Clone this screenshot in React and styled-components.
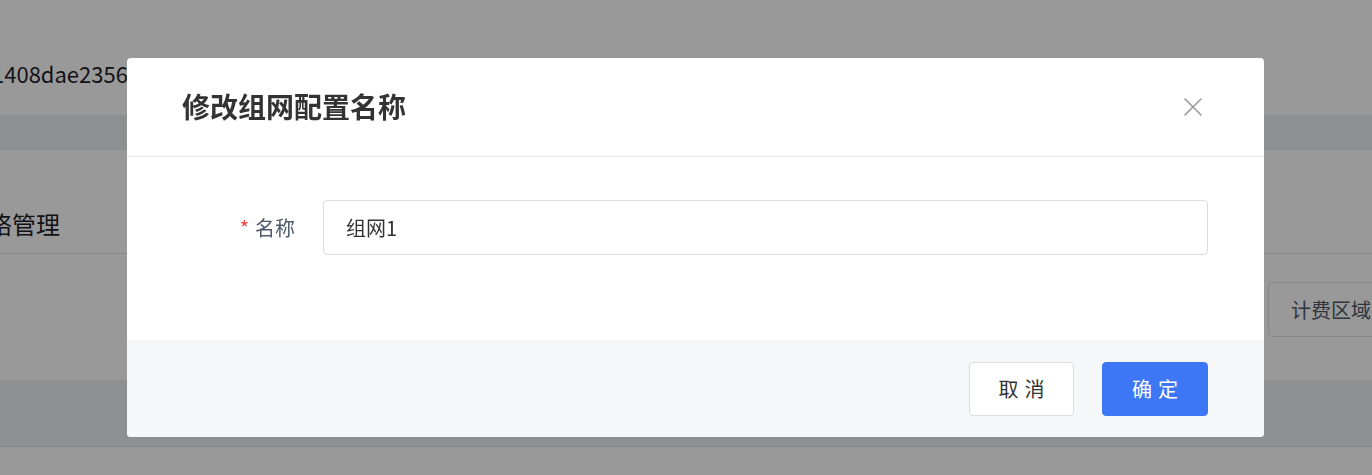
import styled, { createGlobalStyle } from "styled-components";

const GlobalStyle = createGlobalStyle`
  html, body {
    margin: 0;
    padding: 0;
    background: #ffffff;
    overflow: hidden;
  }
  body {
    font-family: "Noto Sans CJK SC", "Noto Sans", sans-serif;
    color: #1d2129;
  }
`;

// page behind the dialog
const Page = styled.div`
  width: 100%;
  height: 475px;
  overflow: hidden;
  display: flex;
  flex-direction: column;
`;

const TopBar = styled.div`
  height: 115px;
  display: flex;
  align-items: center;
  padding-top: 30px;
  box-sizing: border-box;
  font-size: 22px;
  color: #1d2129;
  span {
    margin-left: -8px;
  }
`;

const Band = styled.div`
  height: ${p => p.$h}px;
  background: #edeef1;
  flex-shrink: 0;
`;

const Section = styled.div`
  display: flex;
  flex-direction: column;
  height: 230px;
  flex-shrink: 0;
`;

const SectionTitle = styled.div`
  height: 104px;
  display: flex;
  align-items: center;
  padding-top: 44px;
  box-sizing: border-box;
  font-size: 24px;
  color: #1d2129;
  border-bottom: 1px solid #e5e6eb;
  span {
    margin-left: -36px;
  }
`;

const Toolbar = styled.div`
  display: flex;
  justify-content: flex-end;
  padding-top: 28px;
  margin-right: -120px;
`;

const PageButton = styled.div`
  width: 224px;
  height: 55px;
  box-sizing: border-box;
  border: 1px solid #dcdfe6;
  border-radius: 4px;
  display: flex;
  align-items: center;
  padding-left: 22px;
  font-size: 20px;
  color: #4e5969;
`;

const TableHead = styled.div`
  height: 66px;
  background: #edeef1;
  border-bottom: 1px solid #dcdde2;
  flex-shrink: 0;
`;

// dialog
const Mask = styled.div`
  position: fixed;
  inset: 0;
  background: rgba(0, 0, 0, 0.4);
  display: flex;
  align-items: flex-start;
  padding: 58px 0 0 127px;
`;

const Dialog = styled.div`
  width: 1137px;
  background: #ffffff;
  border-radius: 4px;
  overflow: hidden;
  display: flex;
  flex-direction: column;
`;

const DialogHeader = styled.div`
  height: 99px;
  box-sizing: border-box;
  padding: 0 60px 0 55px;
  display: flex;
  align-items: center;
  justify-content: space-between;
  border-bottom: 1px solid #e5e6eb;
`;

const Title = styled.h2`
  margin: 0;
  font-size: 28px;
  font-weight: 700;
  color: #333333;
  line-height: 1;
  padding-bottom: 2px;
`;

const Close = styled.button`
  width: 22px;
  height: 22px;
  padding: 0;
  border: none;
  background: none;
  display: flex;
  align-items: center;
  justify-content: center;
  cursor: pointer;
`;

const DialogBody = styled.div`
  height: 183px;
  box-sizing: border-box;
  padding: 43px 56px 0 55px;
`;

const FormRow = styled.div`
  display: flex;
  align-items: center;
  gap: 28px;
`;

const Label = styled.label`
  width: 113px;
  text-align: right;
  font-size: 20px;
  color: #4e5969;
  flex-shrink: 0;
  em {
    font-style: normal;
    color: #f53f3f;
    margin-right: 6px;
  }
`;

const Input = styled.input`
  flex: 1;
  height: 55px;
  box-sizing: border-box;
  border: 1px solid #dcdcdc;
  border-radius: 4px;
  padding: 0 22px;
  font-family: inherit;
  font-size: 20px;
  color: #333333;
  outline: none;
`;

const DialogFooter = styled.div`
  height: 97px;
  background: #f6f7f9;
  display: flex;
  align-items: center;
  justify-content: flex-end;
  gap: 28px;
  padding-right: 56px;
`;

const Button = styled.button`
  width: ${p => p.$w}px;
  height: 54px;
  box-sizing: border-box;
  border-radius: 4px;
  font-family: inherit;
  font-size: 20px;
  letter-spacing: 6px;
  padding: 0 0 0 6px;
  cursor: pointer;
  border: 1px solid ${p => (p.$primary ? "#3d77f6" : "#dcdcdc")};
  background: ${p => (p.$primary ? "#3d77f6" : "#ffffff")};
  color: ${p => (p.$primary ? "#ffffff" : "#333333")};
`;

export default function App() {
  return (
    <>
      <GlobalStyle />
      <Page>
        <TopBar>
          <span>1408dae2356</span>
        </TopBar>
        <Band $h={35} />
        <Section>
          <SectionTitle>
            <span>网络管理</span>
          </SectionTitle>
          <Toolbar>
            <PageButton>计费区域</PageButton>
          </Toolbar>
        </Section>
        <TableHead />
      </Page>
      <Mask>
        <Dialog>
          <DialogHeader>
            <Title>修改组网配置名称</Title>
            <Close aria-label="关闭">
              <svg width="20" height="20" viewBox="0 0 20 20">
                <path d="M2 2L18 18M18 2L2 18" stroke="#999999" strokeWidth="1.6" strokeLinecap="round" />
              </svg>
            </Close>
          </DialogHeader>
          <DialogBody>
            <FormRow>
              <Label>
                <em>*</em>名称
              </Label>
              <Input defaultValue="组网1" />
            </FormRow>
          </DialogBody>
          <DialogFooter>
            <Button $w={105}>取消</Button>
            <Button $w={106} $primary>确定</Button>
          </DialogFooter>
        </Dialog>
      </Mask>
    </>
  );
}
